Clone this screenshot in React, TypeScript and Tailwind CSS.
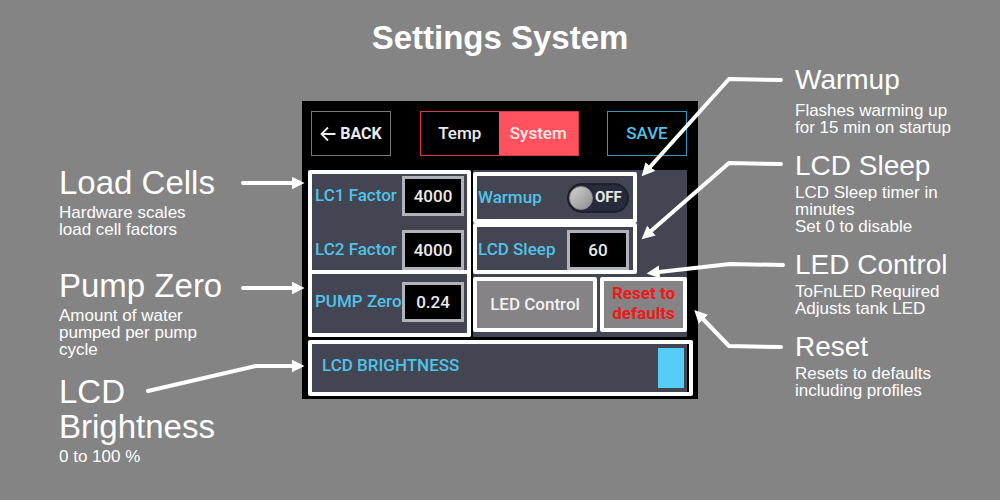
import { useState } from "react";
import type { ReactNode } from "react";

function Note({ title, size, gap, children }: { title: ReactNode; size: string; gap: string; children: ReactNode }) {
  return (
    <section>
      <h2 className={size}>{title}</h2>
      <p className={"text-[17px] leading-[17px] " + gap}>{children}</p>
    </section>
  );
}

function ValueField({ id, label, initial }: { id: string; label: string; initial: string }) {
  const [value, setValue] = useState(initial);
  return (
    <div className="flex h-10 items-center justify-between">
      <label htmlFor={id} className="whitespace-nowrap text-[#4fc3e8]">
        {label}
      </label>
      <input
        id={id}
        value={value}
        onChange={(e) => setValue(e.target.value)}
        className="h-10 w-[62px] border-3 border-[#b0b3b9] bg-black text-center text-[17px] text-[#ececec] outline-none"
      />
    </div>
  );
}

const arrows = [
  "M243 183H292",
  "M243 288H292",
  "M148 391L256 366H292",
  "M781 80L729 79L650 167",
  "M781 164L729 163L651 231",
  "M783 265L730 264L659 272",
  "M781 347L729 346L703 319",
];

function Arrows() {
  return (
    <svg
      aria-hidden="true"
      viewBox="0 0 1000 500"
      className="pointer-events-none absolute -left-[302px] -top-[101px] h-[500px] w-[1000px] max-w-none"
    >
      <defs>
        <marker id="head" markerUnits="userSpaceOnUse" markerWidth="14" markerHeight="14" refX="0.5" refY="6.5" orient="auto">
          <path d="M0 0L13 6.5L0 13Z" fill="#fff" />
        </marker>
      </defs>
      {arrows.map((d) => (
        <path key={d} d={d} fill="none" stroke="#fff" strokeWidth="4" strokeLinecap="round" strokeLinejoin="round" markerEnd="url(#head)" />
      ))}
    </svg>
  );
}

function Device() {
  const [warm, setWarm] = useState(false);
  const [brightness, setBrightness] = useState(100);
  return (
    <div className="relative mt-[43px] bg-black pb-[3px] pl-1.5 pr-[5px] pt-2.5 font-['Roboto',sans-serif] text-[17px] font-medium">
      <nav className="flex h-[45px] justify-between pl-[3px] pr-1.5">
        <button className="flex w-20 items-center justify-center gap-1 border border-[#75797c] text-[16px] font-bold text-[#ececec]">
          <svg viewBox="0 0 16 16" className="h-4 w-4" fill="none" stroke="currentColor" strokeWidth="1.8">
            <path d="M15.5 8H1.5M8 1.5L1.5 8L8 14.5" />
          </svg>
          BACK
        </button>
        <div className="flex w-[159px] border border-[#d93a48]">
          <button className="flex-1 text-[#ececec]">Temp</button>
          <button className="flex-1 bg-[#ff525e] text-[#fbe9ea]">System</button>
        </div>
        <button className="w-20 border border-[#2f9cba] text-[#4fc3e8]">SAVE</button>
      </nav>

      <div className="mt-3.5 flex gap-0.5 pr-1.5">
        <div className="w-[163px]">
          <div className="flex flex-col gap-3.5 rounded-t-xs border-4 border-white bg-[#434553] pl-[3px] pr-[3px] pt-0.5">
            <ValueField id="lc1" label="LC1 Factor" initial="4000" />
            <ValueField id="lc2" label="LC2 Factor" initial="4000" />
          </div>
          <div className="h-[63px] rounded-b-xs border-4 border-t-0 border-white bg-[#434553] pl-[3px] pr-[3px] pt-2">
            <ValueField id="pump" label="PUMP Zero" initial="0.24" />
          </div>
        </div>

        <div className="flex-1 bg-[#434553] pt-0.5">
          <div className="flex h-[51px] w-[164px] items-center justify-between rounded-xs border-4 border-white pl-px pr-1">
            <label htmlFor="warmup" className="text-[#4fc3e8]">
              Warmup
            </label>
            <label className="flex h-[30px] w-[62px] cursor-pointer items-center gap-0.5 rounded-full border-2 border-[#1c1f2c] bg-[#272b3b] text-[15px] font-bold text-[#e6e6e6]">
              <input
                id="warmup"
                type="checkbox"
                checked={warm}
                onChange={(e) => setWarm(e.target.checked)}
                className="h-6 w-6 appearance-none rounded-full border border-[#8c8c8c] bg-linear-to-br from-[#d2d2d2] to-[#8e8e8e]"
              />
              {warm ? "ON" : "OFF"}
            </label>
          </div>
          <div className="h-[51px] w-[164px] rounded-xs border-4 border-white pl-px pr-1 pt-[3px]">
            <ValueField id="sleep" label="LCD Sleep" initial="60" />
          </div>
          <div className="mt-[3px] flex h-[55px] gap-[3px]">
            <button className="w-[124px] rounded-xs border-4 border-white bg-[#858385] text-[#f2f2f2]">LED Control</button>
            <button className="flex-1 rounded-xs border-4 border-white bg-[#858385] pb-1 font-bold leading-5 text-[#f01818]">
              Reset to defaults
            </button>
          </div>
        </div>
      </div>

      <div className="mt-[3px] h-14 rounded-xs border-4 border-white bg-black pr-0.5">
        <div className="flex h-full items-center gap-3 bg-[#434553] pl-2.5 pr-[3px]">
          <label htmlFor="brightness" className="pb-1 text-[#4fc3e8]">
            LCD BRIGHTNESS
          </label>
          <input
            id="brightness"
            type="range"
            value={brightness}
            onChange={(e) => setBrightness(Number(e.target.value))}
            className="h-10 min-w-0 flex-1 appearance-none bg-transparent [&::-webkit-slider-thumb]:h-10 [&::-webkit-slider-thumb]:w-[26px] [&::-webkit-slider-thumb]:appearance-none [&::-webkit-slider-thumb]:bg-[#55cdf7]"
          />
        </div>
      </div>
      <Arrows />
    </div>
  );
}

export default function App() {
  const large = "text-[33px] leading-[35px]";
  const medium = "text-[28px] leading-8";
  return (
    <main className="min-h-screen overflow-x-hidden bg-[#848484] pt-[18px] font-['Liberation_Sans',Arial,sans-serif] text-white">
      <h1 className="text-center text-[33px] font-bold leading-10">Settings System</h1>
      <div className="grid grid-cols-[1fr_396px_1fr] items-start">
        <div className="ml-auto w-[243px] whitespace-nowrap pt-[107px]">
          <Note title="Load Cells" size={large} gap="mt-1">
            Hardware scales
            <br />
            load cell factors
          </Note>
          <div className="h-[30px]" />
          <Note title="Pump Zero" size={large} gap="mt-1">
            Amount of water
            <br />
            pumped per pump
            <br />
            cycle
          </Note>
          <div className="h-4" />
          <Note title={<>LCD<br />Brightness</>} size={large} gap="mt-1">
            0 to 100 %
          </Note>
        </div>
        <Device />
        <div className="flex flex-col gap-3.5 whitespace-nowrap pl-[97px] pt-1.5">
          <Note title="Warmup" size={medium} gap="mt-1.5">
            Flashes warming up
            <br />
            for 15 min on startup
          </Note>
          <Note title="LCD Sleep" size={medium} gap="mt-0.5">
            LCD Sleep timer in
            <br />
            minutes
            <br />
            Set 0 to disable
          </Note>
          <Note title="LED Control" size={medium} gap="mt-0.5">
            ToFnLED Required
            <br />
            Adjusts tank LED
          </Note>
          <Note title="Reset" size={medium} gap="mt-0.5">
            Resets to defaults
            <br />
            including profiles
          </Note>
        </div>
      </div>
    </main>
  );
}
